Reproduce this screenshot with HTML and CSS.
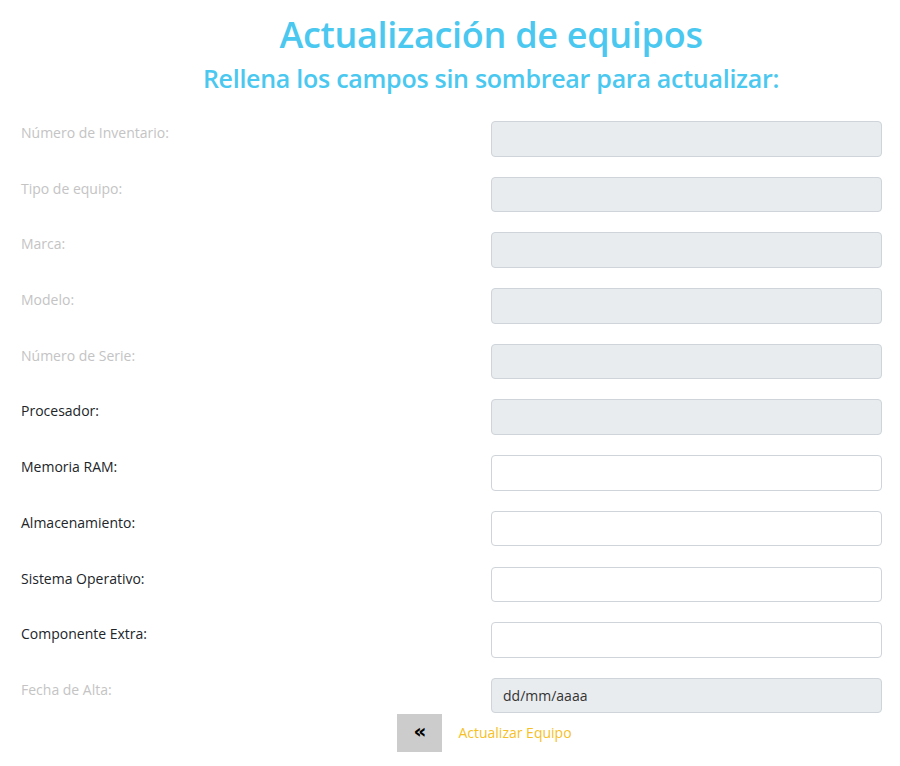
FILE: index.html
```html
<!DOCTYPE html>
<html lang="es">
<head>
<meta charset="utf-8">
<title>Actualización de equipos</title>
<link rel="stylesheet" href="styles.css">
</head>
<body>
<header class="head">
  <h1 class="title">Actualización de equipos</h1>
  <h2 class="subtitle">Rellena los campos sin sombrear para actualizar:</h2>
</header>
<form class="form">
  <div class="row"><label class="lbl off">Número de Inventario:</label><input class="ctl" disabled></div>
  <div class="row"><label class="lbl off">Tipo de equipo:</label><input class="ctl" disabled></div>
  <div class="row"><label class="lbl off">Marca:</label><input class="ctl" disabled></div>
  <div class="row"><label class="lbl off">Modelo:</label><input class="ctl" disabled></div>
  <div class="row"><label class="lbl off">Número de Serie:</label><input class="ctl" disabled></div>
  <div class="row"><label class="lbl">Procesador:</label><input class="ctl" disabled></div>
  <div class="row"><label class="lbl">Memoria RAM:</label><input class="ctl"></div>
  <div class="row"><label class="lbl">Almacenamiento:</label><input class="ctl"></div>
  <div class="row"><label class="lbl">Sistema Operativo:</label><input class="ctl"></div>
  <div class="row"><label class="lbl">Componente Extra:</label><input class="ctl"></div>
  <div class="row last"><label class="lbl off">Fecha de Alta:</label><input class="ctl" disabled value="dd/mm/aaaa"></div>
  <div class="actions">
    <button type="button" class="back">&laquo;</button>
    <button type="button" class="submit">Actualizar Equipo</button>
  </div>
</form>
</body>
</html>
```
FILE: styles.css
```css
* { box-sizing: border-box; }
body {
  margin: 0;
  background: #fff;
  font-family: "Open Sans", "Noto Sans", sans-serif;
  color: #212529;
}
.head {
  text-align: center;
  padding: 12px 0 0 82px;
  color: #4ac8f0;
}
.title {
  margin: 0;
  font-size: 36px;
  font-weight: 600;
  line-height: 46px;
  letter-spacing: -0.3px;
}
.subtitle {
  margin: 4px 0 0;
  font-size: 25px;
  font-weight: 600;
  line-height: 32px;
  letter-spacing: -0.27px;
}
.form {
  padding: 27px 18px 0 21px;
}
.row {
  display: grid;
  grid-template-columns: 1fr 391px;
  height: 55.7px;
}
.row.last { height: 36px; }
.lbl {
  font-size: 14px;
  line-height: 20px;
  padding-top: 2px;
  color: #212529;
}
.lbl.off { color: #c4c4c4; }
.ctl {
  height: 35.5px;
  width: 391px;
  border: 1px solid #ced4da;
  border-radius: 4px;
  background: #fff;
  font: inherit;
  font-size: 14px;
  padding: 6px 11px;
  color: #333;
}
.ctl:disabled { background: #e9ecef; color: #333; opacity: 1; }
.actions {
  display: flex;
  justify-content: center;
  align-items: center;
  gap: 16px;
  padding-left: 66px;
}
.back {
  width: 45px;
  height: 38px;
  border: 0;
  background: #cccccc;
  font-size: 20px;
  font-weight: 700;
  color: #000;
  padding: 0 0 4px;
  font-family: "DejaVu Sans", sans-serif;
}
.submit {
  border: 0;
  background: none;
  font: inherit;
  font-size: 14px;
  color: #f6bf26;
  padding: 0;
}
```
